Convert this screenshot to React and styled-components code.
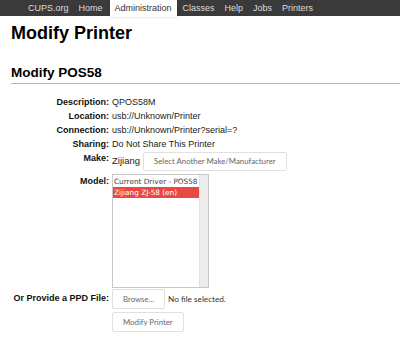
import React from "react";
import styled, { createGlobalStyle } from "styled-components";

const Global = createGlobalStyle`
  html, body { margin: 0; padding: 0; background: #fff; }
  body { font-family: "Liberation Sans", Arial, sans-serif; color: #111; }
`;

const Nav = styled.div`
  display: flex;
  align-items: flex-start;
  height: 16px;
  background: #3a3a3a;
  padding-left: 23px;
`;

const NavItem = styled.div`
  font-size: 9px;
  line-height: 16px;
  padding: 0 5px;
  color: ${(p) => (p.$active ? "#333" : "#dcdcdc")};
  background: ${(p) => (p.$active ? "#fff" : "transparent")};
  height: ${(p) => (p.$active ? "17px" : "16px")};
  margin: ${(p) => (p.$active ? "0 1px 0 2px" : "0")};
  box-shadow: ${(p) => (p.$active ? "0 0 2px rgba(0,0,0,0.25)" : "none")};
`;

const Page = styled.div`
  padding: 0 11px;
`;

const H1 = styled.h1`
  font-size: 18px;
  font-weight: bold;
  margin: 0;
  padding-top: 7px;
  line-height: 21px;
  color: #000;
`;

const H2 = styled.h2`
  font-size: 13.5px;
  font-weight: bold;
  margin: 0;
  margin-top: 21px;
  line-height: 16px;
  padding-bottom: 2px;
  border-bottom: 1px solid #b5b5b5;
  color: #000;
  margin-right: -11px;
`;

const Form = styled.div`
  display: grid;
  grid-template-columns: 98px 1fr;
  column-gap: 3px;
  margin-top: 11px;
`;

const Label = styled.div`
  justify-self: end;
  white-space: nowrap;
  text-align: right;
  font-weight: bold;
  font-size: 9px;
  line-height: 14px;
  color: #111;
  padding-top: ${(p) => p.$pt || 0}px;
`;

const Value = styled.div`
  line-height: 14px;
  font-size: 9px;
  color: #222;
  display: flex;
  align-items: ${(p) => (p.$center ? "center" : "flex-start")};
  gap: ${(p) => p.$gap || 3}px;
`;

const Button = styled.div`
  font-family: Lato, "Open Sans", sans-serif;
  font-size: 7.8px;
  color: #666;
  background: #fff;
  border: 1px solid #e0e0e0;
  border-radius: 2px;
  height: ${(p) => p.$h || 20}px;
  line-height: ${(p) => (p.$h || 20) - 2}px;
  padding: 0 ${(p) => p.$px || 9}px;
  margin-top: ${(p) => p.$mt || 0}px;
  box-sizing: border-box;
  white-space: nowrap;
`;

const MakeText = styled.span`
  font-size: 9.5px;
  line-height: 14px;
`;

const ListBox = styled.div`
  width: 97px;
  height: 114px;
  border: 1px solid #c8c8c8;
  box-sizing: border-box;
  display: flex;
  margin-top: 3px;
  background: #fff;
`;

const Options = styled.div`
  flex: 1;
  padding-top: 1px;
  overflow: hidden;
`;

const Option = styled.div`
  font-family: "DejaVu Sans", sans-serif;
  font-size: 7.3px;
  line-height: 11px;
  padding-left: 1px;
  white-space: nowrap;
  color: ${(p) => (p.$sel ? "#fff" : "#444")};
  background: ${(p) => (p.$sel ? "#e84a43" : "transparent")};
`;

const Scroll = styled.div`
  width: 8px;
  background: #ececec;
  border-left: 1px solid #e2e2e2;
`;

const FileNote = styled.span`
  font-family: Lato, "Open Sans", sans-serif;
  font-size: 8.2px;
  color: #333;
`;

const BtnCol = styled.div`
  display: flex;
  flex-direction: column;
  gap: 3px;
  align-items: flex-start;
  padding-top: 1px;
`;

export default function App() {
  return (
    <>
      <Global />
      <Nav>
        <NavItem>CUPS.org</NavItem>
        <NavItem>Home</NavItem>
        <NavItem $active>Administration</NavItem>
        <NavItem>Classes</NavItem>
        <NavItem>Help</NavItem>
        <NavItem>Jobs</NavItem>
        <NavItem>Printers</NavItem>
      </Nav>
      <Page>
        <H1>Modify Printer</H1>
        <H2>Modify POS58</H2>
        <Form>
          <Label>Description:</Label>
          <Value>QPOS58M</Value>
          <Label>Location:</Label>
          <Value>usb://Unknown/Printer</Value>
          <Label>Connection:</Label>
          <Value>usb://Unknown/Printer?serial=?</Value>
          <Label>Sharing:</Label>
          <Value>Do Not Share This Printer</Value>
          <Label $pt={0}>Make:</Label>
          <Value $center>
            <MakeText>Zijiang</MakeText>
            <Button $px={10} $h={19} $mt={1}>Select Another Make/Manufacturer</Button>
          </Value>
          <Label $pt={3}>Model:</Label>
          <Value>
            <ListBox>
              <Options>
                <Option>Current Driver - POS58</Option>
                <Option $sel>Zijiang ZJ-58 (en)</Option>
              </Options>
              <Scroll />
            </ListBox>
          </Value>
          <Label $pt={3}>Or Provide a PPD File:</Label>
          <BtnCol>
            <Value $center>
              <Button $px={10}>Browse...</Button>
              <FileNote>No file selected.</FileNote>
            </Value>
            <Button $px={10}>Modify Printer</Button>
          </BtnCol>
        </Form>
      </Page>
    </>
  );
}
